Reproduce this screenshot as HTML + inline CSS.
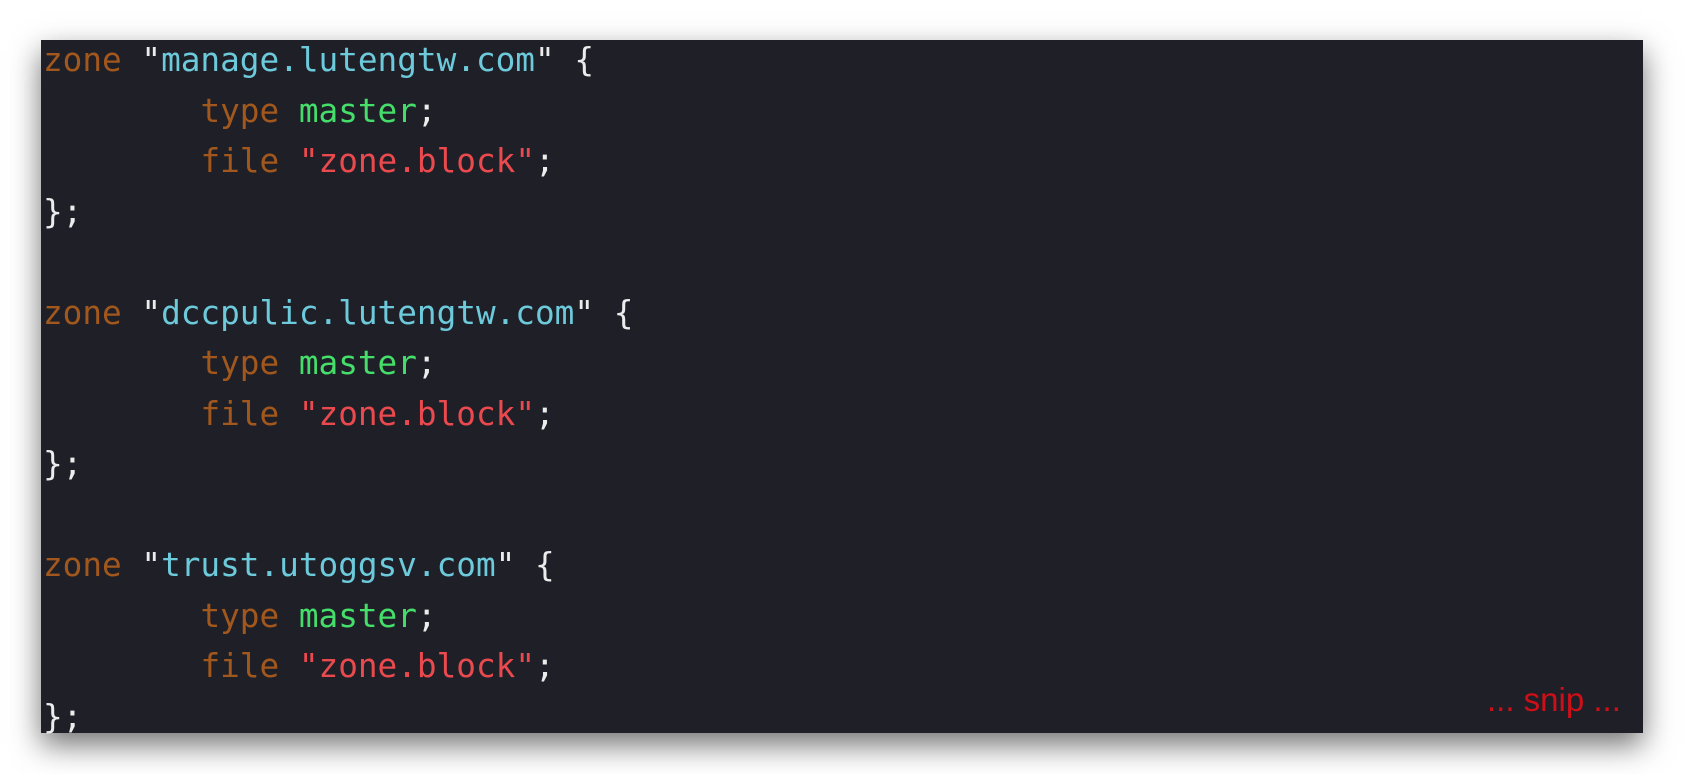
<!DOCTYPE html>
<html><head><meta charset="utf-8"><style>
html,body{margin:0;padding:0;background:#fff;width:1684px;height:774px;overflow:hidden;position:relative}
.panel{position:absolute;left:41px;top:40px;width:1602px;height:693px;background:#1f1f28;box-shadow:0 12px 28px rgba(0,0,0,0.55);}
pre{position:absolute;left:43px;top:35px;margin:0;font-family:"DejaVu Sans Mono","Liberation Mono",monospace;font-size:32.7px;line-height:50.5px;color:#ececec}
.k{color:#a2581c}.s{color:#6ccadb}.g{color:#45de6a}.r{color:#ea4a4e}
.snip{position:absolute;left:1487px;top:680px;font-family:"Liberation Sans",sans-serif;font-size:33px;color:#cf0f18;line-height:40px}
</style></head><body>
<div class="panel"></div>
<pre><span class="k">zone</span> "<span class="s">manage.lutengtw.com</span>" {
        <span class="k">type</span> <span class="g">master</span>;
        <span class="k">file</span> <span class="r">"zone.block"</span>;
};

<span class="k">zone</span> "<span class="s">dccpulic.lutengtw.com</span>" {
        <span class="k">type</span> <span class="g">master</span>;
        <span class="k">file</span> <span class="r">"zone.block"</span>;
};

<span class="k">zone</span> "<span class="s">trust.utoggsv.com</span>" {
        <span class="k">type</span> <span class="g">master</span>;
        <span class="k">file</span> <span class="r">"zone.block"</span>;
};</pre>
<div class="snip">... snip ...</div>
</body></html>
